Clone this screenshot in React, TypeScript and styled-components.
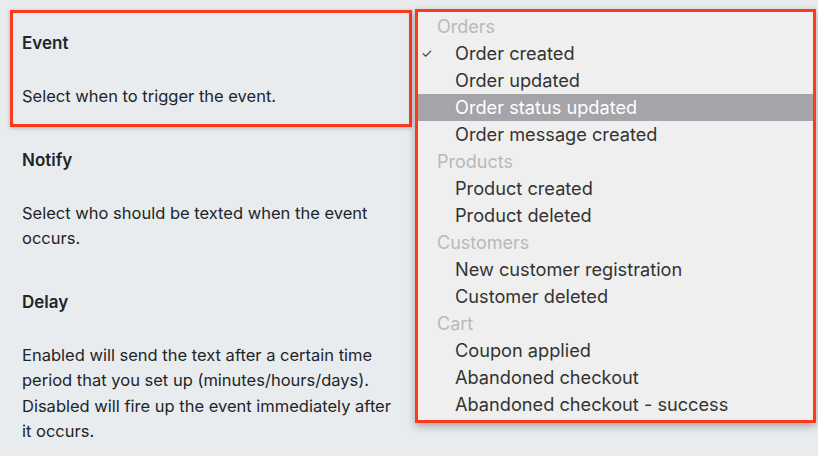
import React, { ReactElement } from 'react';
import styled, { createGlobalStyle } from 'styled-components';

const GlobalStyle = createGlobalStyle`
  html, body {
    margin: 0;
    padding: 0;
    background: #e9ecef;
  }
  body {
    font-family: Inter, 'Liberation Sans', Arial, sans-serif;
    -webkit-font-smoothing: antialiased;
  }
`;

const Page = styled.div`
  width: 818px;
  height: 456px;
  overflow: hidden;
  box-sizing: border-box;
  padding: 10px 0 0 10px;
  display: flex;
  flex-direction: row;
  align-items: flex-start;
  gap: 3px;
`;

const Column = styled.div`
  width: 402px;
  display: flex;
  flex-direction: column;
`;

/* highlighted = red annotation frame */
const Section = styled.div<{ $highlighted?: boolean }>`
  border: 3px solid ${(p) => (p.$highlighted ? '#fb3a1e' : 'transparent')};
  box-shadow: ${(p) => (p.$highlighted ? '0 1px 4px rgba(0, 0, 0, 0.25)' : 'none')};
  padding: 18px 9px 14px;
  color: #212529;
`;

const Title = styled.h3`
  margin: 0 0 28px;
  font-size: 17px;
  font-weight: 600;
  line-height: 25px;
`;

const Text = styled.p`
  margin: 0;
  font-size: 16.5px;
  line-height: 25.5px;
  width: 380px;
`;

const Dropdown = styled.div`
  margin-top: -1px;
  width: 401px;
  box-sizing: border-box;
  border: 3px solid #fb3a1e;
  background: #efefef;
  box-shadow: 0 3px 8px rgba(0, 0, 0, 0.3);
  padding: 1px 0 2px;
`;

const GroupLabel = styled.div`
  height: 27px;
  line-height: 27px;
  padding-left: 19px;
  font-size: 18px;
  color: #b9b9b9;
`;

const Option = styled.div<{ $active?: boolean }>`
  position: relative;
  height: 27px;
  line-height: 27px;
  padding-left: 37px;
  font-size: 18.2px;
  color: ${(p) => (p.$active ? '#ffffff' : '#333333')};
  background: ${(p) => (p.$active ? '#a5a4a9' : 'transparent')};
`;

const Check = styled.span`
  position: absolute;
  left: 3px;
  top: 0;
  font-size: 13px;
  color: #333333;
`;

interface Group {
  label: string;
  options: string[];
}

const groups: Group[] = [
  {
    label: 'Orders',
    options: ['Order created', 'Order updated', 'Order status updated', 'Order message created'],
  },
  { label: 'Products', options: ['Product created', 'Product deleted'] },
  { label: 'Customers', options: ['New customer registration', 'Customer deleted'] },
  { label: 'Cart', options: ['Coupon applied', 'Abandoned checkout', 'Abandoned checkout - success'] },
];

const App = (): ReactElement => {
  return (
    <>
      <GlobalStyle />
      <Page>
        <Column>
          <Section $highlighted>
            <Title>Event</Title>
            <Text>Select when to trigger the event.</Text>
          </Section>
          <Section>
            <Title>Notify</Title>
            <Text>Select who should be texted when the event occurs.</Text>
          </Section>
          <Section>
            <Title>Delay</Title>
            <Text>
              Enabled will send the text after a certain time period that you set up
              (minutes/hours/days). Disabled will fire up the event immediately after it occurs.
            </Text>
          </Section>
        </Column>
        <Dropdown>
          {groups.map((g) => (
            <React.Fragment key={g.label}>
              <GroupLabel>{g.label}</GroupLabel>
              {g.options.map((o) => (
                <Option key={o} $active={o === 'Order status updated'}>
                  {o === 'Order created' && <Check>✓</Check>}
                  {o}
                </Option>
              ))}
            </React.Fragment>
          ))}
        </Dropdown>
      </Page>
    </>
  );
};

export default App;
